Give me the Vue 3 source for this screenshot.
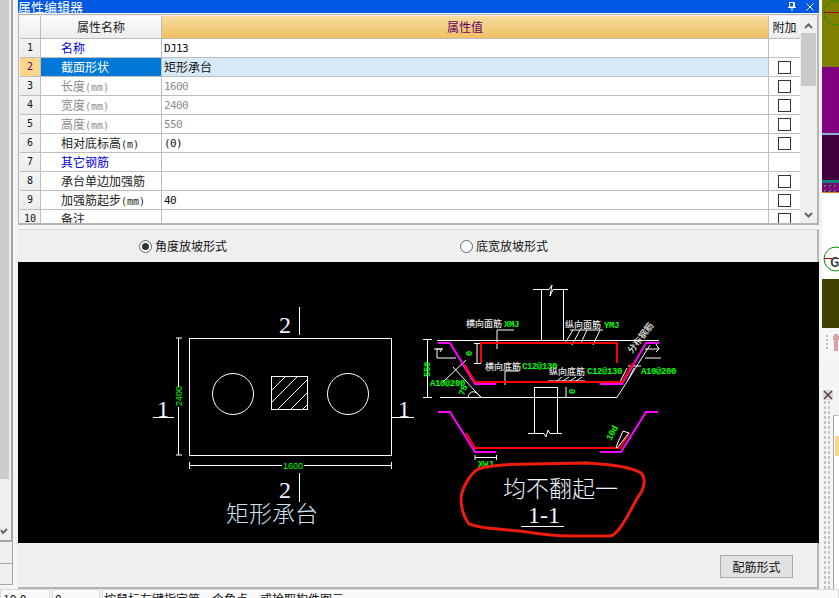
<template>
  <div class="screen">
    <div class="middle">
      <div class="left-strip">
        <div class="left-scroll">
          <div class="left-thumb"></div>
          <svg class="left-chevron" width="8" height="7" viewBox="0 0 8 7"><path d="M1 2 L3 5 L7 1" fill="none" stroke="#666" stroke-width="2" /></svg>
        </div>
        <div class="left-box"></div>
        <div class="left-box short"></div>
      </div>

      <div class="dialog">
        <div class="titlebar">
          <span class="title-text">属性编辑器</span>
          <svg class="pin" width="8" height="9" viewBox="0 0 8 9"><path d="M1.500 .5H6.500V5H1.500ZM0 5.500H8M4 5.500V9M5.500 .5V5" fill="none" stroke="#fff" stroke-width="1" /></svg>
          <svg class="close" width="8" height="8" viewBox="0 0 8 8"><path d="M.5 .5L7.500 7.500M7.500 .5L.5 7.500" fill="none" stroke="#fff" stroke-width="1" /></svg>
        </div>

        <div class="grid-panel">
          <div class="grid-body">
            <div class="rows">
              <div class="row head">
                <div class="cell num"></div>
                <div class="cell name">属性名称</div>
                <div class="cell value">属性值</div>
                <div class="cell extra">附加</div>
              </div>
              <div
                v-for="row in rows"
                :key="row.id"
                class="row"
                :class="{ active: row.id === 2 }"
              >
                <div class="cell num">{{ row.id }}</div>
                <div class="cell name" :class="row.kind">{{ row.name }}<span class="unit">{{ row.unit }}</span></div>
                <div class="cell value" :class="[row.kind, { mono: row.id !== 2 }]">{{ row.value }}</div>
                <div class="cell extra">
                  <span v-if="row.check" class="check"></span>
                </div>
              </div>
            </div>
            <div class="scrollbar">
              <svg class="chev" width="9" height="6" viewBox="0 0 9 6"><path d="M1 5 L4.500 1.500 L8 5" fill="none" stroke="#666" stroke-width="2" /></svg>
              <div class="thumb"></div>
              <svg class="chev bottom" width="9" height="6" viewBox="0 0 9 6"><path d="M1 1 L4.500 4.500 L8 1" fill="none" stroke="#666" stroke-width="2" /></svg>
            </div>
          </div>
        </div>

        <div class="drawing-panel">
          <div class="radios">
            <label class="radio first"><span class="dot on"></span>角度放坡形式</label>
            <label class="radio second"><span class="dot"></span>底宽放坡形式</label>
          </div>

          <svg class="drawing" viewBox="18 262 801 281" width="801" height="281">
            <!-- plan view -->
            <g class="line">
              <rect x="189.500" y="338.500" width="202" height="117" />
              <circle cx="233" cy="394" r="20.500" />
              <circle cx="348" cy="394" r="20.500" />
              <rect x="271.500" y="376.500" width="36" height="33" />
              <path d="M271 391L285 377M271 403L297 377M278 409L308 379M291 409L308 392M303 409L308 404" />
              <path d="M299.500 307V335M299.500 473V502M153 417.500H174M392 417.500H414" />
              <path d="M178.500 338V455M176 338H182M176 455H182M189 465.500H392M189.500 462V469M391.500 462V469" />
            </g>
            <rect x="174" y="387" width="9" height="20" fill="#000" />
            <text class="dim" transform="rotate(-90 181.500 406)" x="181.500" y="406">2400</text>
            <rect x="282" y="460" width="22" height="10" fill="#000" />
            <text class="dim" x="283" y="469">1600</text>
            <text class="big" x="279" y="333">2</text>
            <text class="big" x="279" y="498">2</text>
            <text class="big" x="157" y="417">1</text>
            <text class="big" x="398" y="417">1</text>
            <text class="cad-title" x="226" y="522">矩形承台</text>

            <!-- section 2-2 -->
            <g class="line">
              <path d="M533 289.500H549L552 285L550 296L553 289.500H568M541.500 290V340M563.500 290V340" />
              <path d="M437 340.500H659M453 367L481 397.500H617L650 345M440 397.500H481" />
              <path d="M534.500 387V433M557.500 387V433M534.500 387.500H557.500" />
              <path d="M427.500 339V397M423 339.500H432M423 397.500H432" />
              <path d="M474 343.500H481M477 343V363M474 363.500H481M566 387V397" />
              <path d="M434 349H443M436 349H442L440 352M437 358H456M437 350V358M466 360L443 382" />
              <path d="M659 349H645M656 344L659 349L656 352M645 358H661M641 366H628" />
              <path d="M497 330H514M497 330V349M570 330H603" />
              <path d="M565 343L573 330M580 330L572 345M587 330L581 343M593 345L600 330M505 371H519M505 371V385" />
              <path d="M557 381L562 377M563 381L569 377M570 381L576 377M576 381L582 377M548 381H585M627 368L620 382M634 368L628 380" />
              <path d="M468 397C470 390 475 390 481 397" />
            </g>
            <path class="magenta" d="M438 343H450L475 384H496M600 384H622L646 343H659" />
            <path class="red" d="M481 363V343H617V363M465 365L475 382H622L633 363" />
            <text class="label" x="466" y="327">横向面筋</text>
            <text class="dim wide" x="504" y="327">XMJ</text>
            <text class="label" x="565" y="328">纵向面筋</text>
            <text class="dim wide" x="604" y="328">YMJ</text>
            <text class="label" x="485" y="370">横向底筋</text>
            <text class="dim wide" x="522" y="369">C12@130</text>
            <text class="label" x="549" y="375">纵向底筋</text>
            <text class="dim wide" x="587" y="374">C12@130</text>
            <text class="dim wide" x="430" y="386">A10@200</text>
            <text class="dim wide" x="641" y="374">A10@200</text>
            <text class="dim wide" transform="rotate(-90 430 377)" x="430" y="377">550</text>
            <text class="dim wide" transform="rotate(-70 464 396)" x="464" y="396">75</text>
            <text class="dim wide" transform="rotate(-90 472 356)" x="472" y="356">0</text>
            <text class="dim wide" transform="rotate(-90 575 394)" x="575" y="394">0</text>
            <text class="label" transform="rotate(-52 632 354)" x="632" y="354">分布钢筋</text>

            <!-- section 1-1 -->
            <path class="magenta" d="M438 412H450L475 452H496M600 452H621L646 412H658" />
            <path class="red" d="M466 433L475 448H620L629 433" />
            <g class="line">
              <path d="M534.500 400V433M557.500 400V433M528 433.500H544L546 437L548 430L550 433.500H562" />
              <path d="M475 455V460M496.500 455V460M475 457.500H497M623 431L629 433L617 448L616 447L623 431" />
            </g>
            <text class="dim wide" x="478" y="467">XWJ</text>
            <text class="dim wide" transform="rotate(-62 611 441)" x="611" y="441">10d</text>
            <text class="cad-note" x="503" y="497">均不翻起一</text>
            <text class="cad-section" x="528" y="523">1-1</text>
            <path class="line" d="M521 526.500H564" />
            <path class="mark" d="M470 525C464 518 461 508 461 498C462 488 470 474 478 469C490 465 510 464 530 464L587 463C605 464 630 466 641 473C646 478 645 488 638 497C632 507 626 520 620 528C616 533 613 536 610 536L570 536C555 536 540 534 527 532C512 530 495 529 487 528C480 527 474 526 470 524" />
          </svg>

          <div class="footer">
            <button class="rebar-btn">配筋形式</button>
          </div>
        </div>
      </div>

      <div class="right-strip">
        <div class="canvas-top">
          <div class="band olive"></div>
          <div class="band purple"></div>
          <div class="band blue"></div>
          <div class="band dark"></div>
          <div class="band teal"></div>
          <div class="band dotted"></div>
          <div class="band orange"></div>
          <svg class="axis one" width="17" height="28" viewBox="0 0 17 28"><circle cx="14" cy="13" r="12" fill="none" stroke="#0a8a0a" stroke-dasharray="2 0.500" /><path d="M2 12.500H17" stroke="#a00000" /></svg>
        </div>
        <div class="canvas-gap">
          <svg width="17" height="26" viewBox="0 0 17 26"><circle cx="14" cy="13" r="12" fill="none" stroke="#0a8a0a" /><path d="M2 12.500H17" stroke="#a00000" /></svg>
          <span class="axis-label">G</span>
        </div>
        <div class="band murk"></div>
        <div class="tool-row">
          <span class="grip"></span>
          <svg width="6" height="17" viewBox="0 0 6 17"><path d="M3 0V17M0 4H6" stroke="#d9a3a8" stroke-width="4" /></svg>
        </div>
        <svg class="mini-close" width="10" height="10" viewBox="0 0 10 10"><rect width="10" height="10" fill="#e7d8d8" /><path d="M1 1L9 9M9 1L1 9" stroke="#444" stroke-width="1.500" /></svg>
        <div class="dock">
          <div class="dock-grip"></div>
          <div class="dock-panel"><div class="dock-peach"></div></div>
        </div>
      </div>
    </div>

    <div class="statusbar">
      <div class="status-box w1">10.0</div>
      <div class="status-box w2">0</div>
      <div class="status-box w3">按鼠标左键指定第一个角点，或拾取构件图元</div>
    </div>
  </div>
</template>

<script setup>
const rows = [
  { id: 1, name: '名称', unit: '', value: 'DJ13', kind: 'link', check: false },
  { id: 2, name: '截面形状', unit: '', value: '矩形承台', kind: '', check: true },
  { id: 3, name: '长度', unit: '(mm)', value: '1600', kind: 'muted', check: true },
  { id: 4, name: '宽度', unit: '(mm)', value: '2400', kind: 'muted', check: true },
  { id: 5, name: '高度', unit: '(mm)', value: '550', kind: 'muted', check: true },
  { id: 6, name: '相对底标高', unit: '(m)', value: '(0)', kind: '', check: true },
  { id: 7, name: '其它钢筋', unit: '', value: '', kind: 'link', check: false },
  { id: 8, name: '承台单边加强筋', unit: '', value: '', kind: '', check: true },
  { id: 9, name: '加强筋起步', unit: '(mm)', value: '40', kind: '', check: true },
  { id: 10, name: '备注', unit: '', value: '', kind: '', check: true }
]
</script>

<style>
html,
body {
  margin: 0;
  overflow: hidden;
  background: #f4f4f4;
}
</style>

<style scoped>
.screen {
  width: 839px;
  height: 598px;
  overflow: hidden;
  display: flex;
  flex-direction: column;
  background: #f4f4f4;
  font-family: "Noto Sans CJK SC", "Liberation Sans", sans-serif;
  font-size: 12px;
  color: #111;
}

.middle {
  height: 589px;
  display: flex;
}

.left-strip {
  width: 13px;
  margin-right: 5px;
  flex: none;
  display: flex;
  flex-direction: column;
}

.left-scroll {
  height: 542px;
  box-sizing: border-box;
  background: #f0f0f0;
  border-right: 2px solid #a5a5a5;
  border-bottom: 2px solid #a5a5a5;
  position: relative;
}

.left-thumb {
  width: 9px;
  height: 479px;
  background: #cdcdcd;
}

.left-chevron {
  position: absolute;
  left: 0;
  top: 528px;
}

.left-box {
  height: 22px;
  box-sizing: border-box;
  background: #f0f0f0;
  border-right: 1px solid #a5a5a5;
  border-bottom: 1px solid #a5a5a5;
}

.left-box.short {
  height: 21px;
}

.dialog {
  width: 801px;
  flex: none;
  display: flex;
  flex-direction: column;
}

.titlebar {
  height: 13px;
  background: #0058e4;
  color: #fff;
  display: flex;
  align-items: center;
  overflow: hidden;
  font-size: 13px;
}

.title-text {
  flex: 1;
  line-height: 13px;
}

.pin {
  margin-right: 10px;
}

.close {
  margin-right: 5px;
}

.grid-panel {
  margin-top: 1px;
  height: 211px;
  box-sizing: border-box;
  border: 1px solid #b4b4b4;
  border-width: 1px 2px 2px 1px;
  padding: 1px 1px 0;
  background: #efefef;
}

.grid-body {
  height: 207px;
  display: flex;
  overflow: hidden;
}

.rows {
  width: 780px;
  flex: none;
}

.row {
  height: 19px;
  display: flex;
  box-sizing: border-box;
  border-bottom: 1px solid #bdbdbd;
  background: #fff;
}

.row.head {
  height: 23px;
}

.cell {
  box-sizing: border-box;
  border-right: 1px solid #bdbdbd;
  line-height: 18px;
  white-space: nowrap;
}

.num {
  width: 21px;
  background: linear-gradient(#f4f4f4, #ececec);
  text-align: center;
  font-family: "DejaVu Sans Mono", monospace;
  font-size: 10px;
}

.name {
  width: 121px;
  padding-left: 20px;
  color: #222;
}

.unit {
  font-family: "DejaVu Sans Mono", monospace;
  font-size: 10px;
}

.value {
  width: 607px;
  padding-left: 2px;
  color: #111;
}

.extra {
  width: 31px;
  display: flex;
  align-items: center;
  justify-content: center;
  border-right: 0;
}

.head .num,
.head .name,
.head .extra {
  background: linear-gradient(#fbfbfb, #ececec);
  line-height: 22px;
}

.head .name {
  padding-left: 0;
  text-align: center;
}

.head .value {
  background: linear-gradient(#f7dc9f, #f1bf63);
  color: #660066;
  text-align: center;
  line-height: 22px;
  padding-left: 0;
}

.value.mono {
  font-family: "DejaVu Sans Mono", monospace;
  font-size: 11px;
  letter-spacing: -0.6px;
  line-height: 20px;
}

.name.link {
  color: #0000e0;
}

.value.link {
  color: #111;
}

.muted {
  color: #8c8c8c;
}

.active .num {
  background: #fdd58b;
  color: #660066;
}

.active .name {
  background: #0078d7;
  color: #fff;
}

.active .value {
  background: #d8e9f7;
}

.check {
  width: 11px;
  height: 11px;
  border: 1px solid #333;
  background: #fff;
}

.scrollbar {
  flex: 1;
  background: #efefef;
  position: relative;
}

.chev {
  position: absolute;
  left: 4px;
  top: 7px;
}

.chev.bottom {
  top: 196px;
}

.thumb {
  position: absolute;
  top: 17px;
  left: 1px;
  width: 15px;
  height: 53px;
  background: #c9c9c9;
}

.drawing-panel {
  margin-top: 4px;
  display: flex;
  flex-direction: column;
  height: 360px;
  box-sizing: border-box;
  border-top: 1px solid #dcdcdc;
  border-right: 2px solid #b4b4b4;
  border-bottom: 2px solid #b4b4b4;
  background: #efefef;
}

.radios {
  height: 32px;
  position: relative;
  font-size: 12px;
}

.radio {
  position: absolute;
  top: 7px;
  display: flex;
  align-items: center;
  gap: 3px;
  line-height: 18px;
}

.radio.first {
  left: 121px;
}

.radio.second {
  left: 442px;
}

.dot {
  width: 11px;
  height: 11px;
  border: 1px solid #666;
  border-radius: 50%;
  background: #fff;
  position: relative;
}

.dot.on::after {
  content: "";
  position: absolute;
  left: 2px;
  top: 2px;
  width: 7px;
  height: 7px;
  border-radius: 50%;
  background: #333;
}

.drawing {
  display: block;
  flex: none;
  background: #000;
}

.line {
  fill: none;
  stroke: #fff;
  stroke-width: 1;
}

.magenta {
  fill: none;
  stroke: #ff00ff;
  stroke-width: 2;
}

.red {
  fill: none;
  stroke: #ff0000;
  stroke-width: 2;
}

.mark {
  fill: none;
  stroke: #ee1c0c;
  stroke-width: 3;
}

.dim {
  fill: #00ff00;
  font-family: "Liberation Sans", sans-serif;
  font-size: 9px;
}

.dim.wide {
  font-family: "Liberation Mono", monospace;
  font-size: 9px;
  font-weight: 700;
  letter-spacing: -0.4px;
}

.big {
  fill: #eef4ff;
  font-family: "Liberation Serif", serif;
  font-size: 24px;
}

.label {
  fill: #e8e8e8;
  font-size: 9px;
  font-weight: 500;
}

.cad-title {
  fill: #cfe0f4;
  font-size: 23px;
  font-weight: 300;
}

.cad-note {
  fill: #eef4ff;
  font-size: 23px;
  font-weight: 300;
}

.cad-section {
  fill: #eef4ff;
  font-family: "Liberation Serif", serif;
  font-size: 24px;
}

.footer {
  flex: 1;
  display: flex;
  align-items: flex-end;
  justify-content: flex-end;
  padding: 0 24px 9px 0;
}

.rebar-btn {
  width: 73px;
  height: 23px;
  padding: 0;
  border: 1px solid #ababab;
  background: #e2e2e2;
  font-family: inherit;
  font-size: 12px;
  color: #111;
}

.right-strip {
  width: 20px;
  flex: none;
  padding-left: 3px;
  box-sizing: border-box;
}

.canvas-top {
  height: 193px;
  position: relative;
  overflow: hidden;
}

.band.olive {
  height: 67px;
  background: #808000;
}

.band.purple {
  height: 66px;
  background: #800080;
}

.band.blue {
  height: 2px;
  background: #8cb0d8;
}

.band.dark {
  height: 45px;
  background: #400040;
}

.band.teal {
  height: 3px;
  background: #0b8478;
}

.band.dotted {
  height: 9px;
  background-color: #800080;
  background-image: radial-gradient(#18b018 1px, transparent 1px);
  background-size: 5px 5px;
}

.band.orange {
  height: 1px;
  background: #e08020;
}

.axis.one {
  position: absolute;
  left: 0;
  top: 0;
}

.canvas-gap {
  height: 86px;
  background: #fff;
  display: flex;
  align-items: flex-end;
  position: relative;
}

.canvas-gap svg {
  margin-bottom: 7px;
}

.axis-label {
  position: absolute;
  left: 8px;
  bottom: 10px;
  font-size: 13px;
  font-weight: 700;
  color: #444;
  line-height: 14px;
}

.band.murk {
  height: 49px;
  background: #404000;
}

.tool-row {
  height: 36px;
  padding: 6px 0 0 4px;
  box-sizing: border-box;
  display: flex;
  gap: 5px;
  background: #f6f6f6;
}

.grip {
  width: 2px;
  height: 14px;
  margin-top: 1px;
  background: repeating-linear-gradient(#c0c0c0 0 2px, transparent 2px 4px);
}

.mini-close {
  display: block;
  margin: 26px 0 0 1px;
}

.dock {
  display: flex;
  gap: 2px;
  margin-left: 1px;
}

.dock-grip {
  width: 8px;
  height: 196px;
  background-image: radial-gradient(#c4c4c4 1px, transparent 1.200px);
  background-size: 4px 5px;
}

.dock-panel {
  flex: 1;
  height: 196px;
  margin-top: 15px;
  border-left: 1px solid #a5a5a5;
  border-top: 1px solid #c0c0c0;
  background: #fff;
}

.dock-peach {
  height: 20px;
  margin: 20px 0 0 1px;
  background: #fdd58b;
}

.statusbar {
  height: 9px;
  flex: none;
  display: flex;
  gap: 2px;
  overflow: hidden;
  background: #f4f4f4;
}

.status-box {
  height: 20px;
  box-sizing: border-box;
  border: 1px solid #d8d8d8;
  padding-left: 2px;
  line-height: 18px;
  white-space: nowrap;
  background: #fafafa;
}

.w1 {
  width: 50px;
}

.w2 {
  width: 48px;
}

.w3 {
  flex: 1;
  padding-left: 1px;
}
</style>
